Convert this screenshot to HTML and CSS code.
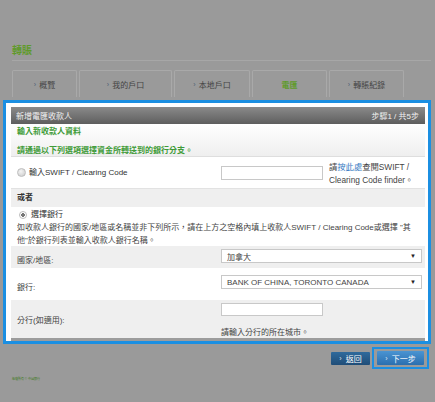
FILE: index.html
```html
<!DOCTYPE html>
<html lang="zh-Hant">
<head>
<meta charset="utf-8">
<title>轉賬</title>
<link rel="stylesheet" href="styles.css">
</head>
<body>
<div class="page">
  <h1 class="title">轉賬</h1>
  <ul class="tabs">
    <li class="tab t1"><span class="arr">›</span>概覽</li>
    <li class="tab t2"><span class="arr">›</span>我的戶口</li>
    <li class="tab t3"><span class="arr">›</span>本地戶口</li>
    <li class="tab t4 active">電匯</li>
    <li class="tab t5"><span class="arr">›</span>轉賬紀錄</li>
  </ul>

  <div class="panel">
    <div class="box">
      <div class="box-head"><span>新增電匯收款人</span><span>步驟1 / 共5步</span></div>
      <div class="intro">
        <p class="green">輸入新收款人資料</p>
        <p class="green second">請通過以下列選項選擇資金所轉送到的銀行分支。</p>
      </div>
      <div class="row swift">
        <label class="radio-label"><span class="radio"></span>輸入SWIFT / Clearing Code</label>
        <input class="field" type="text">
        <p class="hint">請<span class="link">按此處</span>查閱SWIFT / Clearing Code finder。</p>
      </div>
      <div class="row or">或者</div>
      <div class="row choose">
        <label class="radio-label"><span class="radio checked"></span>選擇銀行</label>
        <p class="note">如收款人銀行的國家/地區或名稱並非下列所示，請在上方之空格內填上收款人SWIFT / Clearing Code或選擇 "其他"於銀行列表並輸入收款人銀行名稱。</p>
      </div>
      <div class="frow country">
        <span class="flabel">國家/地區:</span>
        <div class="select"><span>加拿大</span><span class="caret">▼</span></div>
      </div>
      <div class="frow bank">
        <span class="flabel">銀行:</span>
        <div class="select"><span>BANK OF CHINA, TORONTO CANADA</span><span class="caret">▼</span></div>
      </div>
      <div class="frow branch">
        <span class="flabel">分行(如適用):</span>
        <div class="fcol">
          <input class="field" type="text">
          <p class="bhint">請輸入分行的所在城市。</p>
        </div>
      </div>
    </div>
  </div>

  <div class="actions">
    <button class="btn back"><span class="barr">›</span>返回</button>
    <div class="focus"><button class="btn next"><span class="barr">›</span>下一步</button></div>
  </div>
  <p class="foot">版權所有 © 中國銀行</p>
</div>
</body>
</html>
```
FILE: styles.css
```css
* { box-sizing: border-box; margin: 0; padding: 0; }
html, body { width: 435px; height: 402px; overflow: hidden; }
body {
  background: #9a9a9a;
  font-family: "Liberation Sans", "Noto Sans CJK TC", sans-serif;
  font-size: 8px;
  color: #333;
}
.page { padding-top: 44px; }

.title {
  margin: 0 4px 0 12px;
  font-size: 10px;
  font-weight: bold;
  line-height: 13px;
  color: #5f9a2a;
  padding-bottom: 3px;
  border-bottom: 1px solid #a7a7a7;
}

.tabs {
  list-style: none;
  display: flex;
  gap: 2px;
  margin: 9px 0 0 12px;
}
.tab {
  height: 27px;
  border: 1px solid #a9a9a9;
  border-bottom: none;
  border-radius: 2px 2px 0 0;
  display: flex;
  align-items: center;
  justify-content: center;
  color: #444;
  font-size: 8px;
}
.tab .arr { color: #4f5f75; margin-right: 3px; font-size: 7px; }
.t1 { width: 65px; }
.t2 { width: 93px; }
.t3 { width: 76px; }
.t4 { width: 75px; }
.t5 { width: 75px; }
.tab.active { color: #5f9a2a; font-weight: bold; }

.panel {
  margin: 3px 0 0 3px;
  width: 428px;
  border: 3px solid #1b8fe2;
  background: #fff;
  padding: 4px 3px 0 5px;
}
.box { border-bottom: 3px solid #9c9c9c; }

.box-head {
  height: 17px;
  background: linear-gradient(#8a8a8a, #5e5e5e);
  color: #f2f2f2;
  display: flex;
  justify-content: space-between;
  align-items: center;
  padding: 0 6px 0 5px;
}

.intro {
  height: 33px;
  padding: 1px 6px 0;
  background: linear-gradient(#ffffff, #efefef);
  border-bottom: 1px solid #dedede;
}
.green { color: #3f9b38; font-weight: bold; line-height: 13px; }
.second { margin-top: 6px; }

.row { padding-left: 6px; }
.swift {
  height: 32px;
  display: grid;
  grid-template-columns: 204px 108px 1fr;
  align-items: center;
  border-bottom: 1px solid #e2e2e2;
}
.radio-label { display: flex; align-items: center; gap: 3px; line-height: 13px; color: #333; }
.radio {
  width: 9px; height: 9px;
  border-radius: 50%;
  border: 1px solid #bdbdbd;
  background: radial-gradient(circle at 40% 35%, #f4f4f4, #c9c9c9);
}
.radio.checked {
  width: 8px; height: 8px;
  margin: 0 1px 0 2px;
  background: radial-gradient(circle, #777 0 1.6px, #fff 2px);
}
.field {
  display: block;
  width: 102px;
  height: 14px;
  border: 1px solid #c8c8c8;
  background: #fff;
  outline: none;
}
.hint { line-height: 13px; color: #444; padding-top: 2px; font-size: 8.3px; }
.link { color: #3a7cc4; }

.or {
  height: 18px;
  line-height: 18px;
  background: #efefef;
  font-weight: bold;
  color: #333;
}

.choose { height: 39px; padding: 1px 6px 0; }
.note { line-height: 13px; color: #444; }

.frow {
  display: grid;
  grid-template-columns: 204px 1fr;
  padding-left: 6px;
  align-items: start;
}
.flabel { line-height: 13px; color: #444; }
.country { height: 22px; background: #efefef; }
.country .flabel { padding-top: 8px; }
.country .select { margin-top: 3px; }
.bank { height: 32px; background: #fff; }
.bank .flabel { padding-top: 13px; }
.bank .select { margin-top: 7px; }
.branch { height: 38px; background: #efefef; }
.branch .flabel { padding-top: 14px; }
.fcol { padding-top: 3px; }
.fcol .field { height: 13px; }
.bhint { line-height: 13px; margin-top: 10px; color: #444; }

.select {
  width: 201px;
  height: 14px;
  border: 1px solid #c8c8c8;
  background: #fff;
  display: flex;
  justify-content: space-between;
  align-items: center;
  padding: 0 5px;
  color: #444;
}
.caret { font-size: 6px; color: #222; }

.actions {
  display: flex;
  justify-content: flex-end;
  align-items: center;
  gap: 2px;
  margin-top: 3px;
  padding-right: 6px;
}
.btn {
  border: none;
  color: #fff;
  font-family: inherit;
  font-size: 8px;
  height: 13px;
  display: flex;
  align-items: center;
  justify-content: center;
  border-radius: 1px;
}
.barr { font-size: 7px; margin-right: 4px; opacity: .8; }
.back {
  width: 39px;
  background: linear-gradient(#2f6a9c, #1f4d78);
}
.focus {
  border: 2px solid #1b8fe2;
  padding: 2px 3px;
}
.next {
  width: 47px;
  height: 14px;
  background: linear-gradient(#4a94d2, #2b6faf);
}

.foot {
  margin: 8px 0 0 12px;
  font-size: 3px;
  color: #3f7a22;
}
```
